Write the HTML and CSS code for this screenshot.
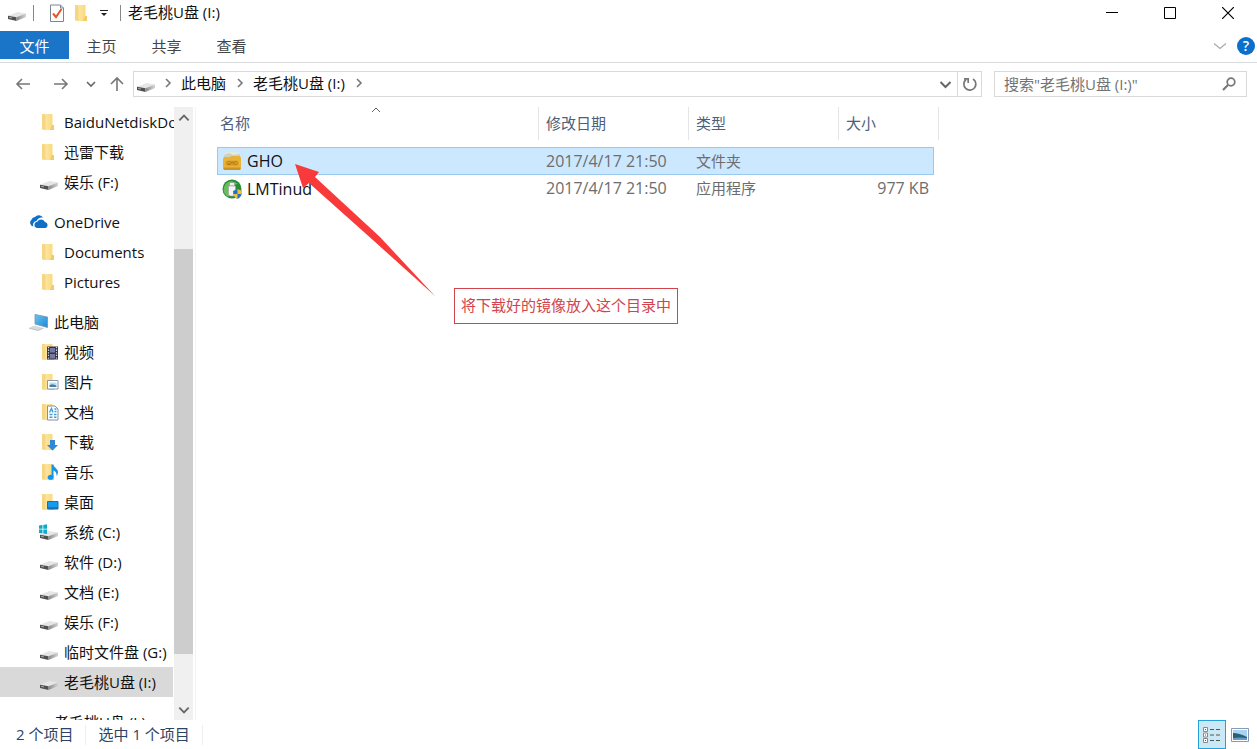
FILE: index.html
```html
<!DOCTYPE html>
<html lang="zh-CN">
<head>
<meta charset="utf-8">
<meta name="viewport" content="width=device-width, initial-scale=1">
<title>老毛桃U盘 (I:)</title>
<link rel="stylesheet" href="styles.css">
</head>
<body>
<svg class="defs" aria-hidden="true">
  <defs>
    <linearGradient id="gold" x1="0" x2="1"><stop offset="0" stop-color="#ffeab0"/><stop offset="1" stop-color="#f9d878"/></linearGradient>
    <linearGradient id="screen" x1="0" y1="0" x2="1" y2="1"><stop offset="0" stop-color="#6cc4f5"/><stop offset="1" stop-color="#1b87d6"/></linearGradient>
    <linearGradient id="metal" x1="0" x2="1"><stop offset="0" stop-color="#8a8a8a"/><stop offset="1" stop-color="#d4d4d4"/></linearGradient>
    <symbol id="drive" viewBox="0 0 20 20">
      <path d="M1 12.800 10.500 9l8.500 1.500-9 4z" fill="#e6e6e6"/>
      <path d="M1 12.800 9.500 14.300V18L1 16z" fill="#505050"/>
      <path d="M9.500 14.300 19 10.500v3.400L9.500 18z" fill="url(#metal)"/>
      <path d="M2 14.300l3 .7" stroke="#a8a8a8"/>
    </symbol>
    <symbol id="folder" viewBox="0 0 20 20">
      <path d="M3 2h10.500v11H15v5H3z" fill="url(#gold)"/>
      <path d="M3 2h1.500l2 1v15L3 17z" fill="#f6d583"/>
      <path d="M13 12.500 15 14v4h-4z" fill="#f1cb68"/>
    </symbol>
    <symbol id="cloud" viewBox="0 0 20 20">
      <path d="M4.500 14.500A3.800 3.800 0 0 1 2.500 7.800 4.200 4.200 0 0 1 6 5 5 5 0 0 1 14 5.500 6 6 0 0 0 7.500 9 3.700 3.700 0 0 0 4.500 14.500z" fill="#0f6fc5"/>
      <path d="M8 16a3.200 3.200 0 0 1 .3-6.300A4.300 4.300 0 0 1 16 10a3.100 3.100 0 0 1 .5 6z" fill="#0f6fc5"/>
    </symbol>
    <symbol id="pc" viewBox="0 0 20 20">
      <path d="M6 2.500 18.500 5v10.500L6 12z" fill="url(#screen)" stroke="#7893a5" stroke-width=".8"/>
      <path d="M5 13.500 14.500 16 9 18.500 0 16z" fill="#d5dade"/><path d="M0 16.200 9 18.500l5.500-2.300" fill="none" stroke="#a5afb8" stroke-width=".7"/>
    </symbol>
    <symbol id="video" viewBox="0 0 20 20">
      <use href="#folder"/><path d="M8 4.500h11v13H8z" fill="#32333e"/>
      <path d="M11 6h5v4.500h-5zM11 12h5v4.500h-5z" fill="#7479a5"/>
      <path d="M9.500 5v12M17.500 5v12" stroke="#ddd" stroke-width="1.200" stroke-dasharray="1.300 1.300"/>
    </symbol>
    <symbol id="picture" viewBox="0 0 20 20">
      <use href="#folder"/><path d="M8.500 8.500H19v8.500H8.500z" fill="#fff" stroke="#8898a5"/>
      <path d="M10.500 10.500h7v2.500h-7z" fill="#b9daf0"/><path d="M10.500 15v-2l3-.8 4 1.300V15z" fill="#467ca5"/>
    </symbol>
    <symbol id="document" viewBox="0 0 20 20">
      <use href="#folder"/><path d="M8.500 4H16l3 3v11H8.500z" fill="#fff" stroke="#81919d"/>
      <path d="M10.500 10.500 12.500 6.500l1.500 4M15.500 7h2M15.500 9.500h2M10.500 12.500h3M15 12.500h2.500M10.500 15.300h3M15 15.300h2.500" fill="none" stroke="#3b9ed8" stroke-width="1.400"/>
    </symbol>
    <symbol id="download" viewBox="0 0 20 20"><use href="#folder"/><path d="M11 8h5v5h3l-5.500 5.500L8 13h3z" fill="#2f87d8"/></symbol>
    <symbol id="music" viewBox="0 0 20 20">
      <use href="#folder"/><path d="M12.500 2.500h2c0 3 4.500 4 4.500 7.500 0 1.500-.6 3-1.500 4 .5-3-1-4.500-3-5.500V15a3 2.500 0 1 1-2-2z" fill="#1495e8"/>
    </symbol>
    <symbol id="desktop" viewBox="0 0 20 20"><use href="#folder"/><path d="M8.500 9.500H19V17H8.500z" fill="#169bf0" stroke="#1971ad"/><path d="M9 16h10" stroke="#125f96"/></symbol>
    <symbol id="system" viewBox="0 0 20 20">
      <use href="#drive"/><path d="M0 3.500 3.500 3v3.800H0zM4.300 2.900 8 2.300v4.500H4.300zM0 7.600h3.500v3.800L0 11zM4.300 7.600H8v4.500l-3.700-.6z" fill="#12a8c9"/>
    </symbol>
    <symbol id="chevron" viewBox="0 0 12 12"><path d="M2 4l4 4 4-4" fill="none" stroke="currentColor" stroke-width="1.600"/></symbol>
  </defs>
</svg>
<div class="window">
  <header class="titlebar">
    <svg class="icon title-drive"><use href="#drive"/></svg>
    <span class="divider"></span>
    <button class="plain quick" aria-label="属性"><svg class="icon" viewBox="0 0 20 20"><path d="M3.500 2h10l3 3v13.500h-13z" fill="#fff" stroke="#7d8794"/><path d="M13.500 2v3h3" fill="none" stroke="#7d8794"/><path d="M6 10.500l3 3.500 5.500-8" fill="none" stroke="#e5532b" stroke-width="2"/></svg></button>
    <button class="plain quick" aria-label="新建文件夹"><svg class="icon"><use href="#folder"/></svg></button>
    <button class="plain quick-menu" aria-label="自定义快速访问工具栏"><svg width="8" height="8" viewBox="0 0 8 8"><path d="M0 1.500h8" stroke="#222"/><path d="M1 4h6L4 7z" fill="#222"/></svg></button>
    <span class="divider"></span>
    <h1 class="title">老毛桃U盘 (I:)</h1>
    <div class="window-buttons">
      <button class="plain" aria-label="最小化"><svg width="12" height="12"><path d="M0 5.500h12" stroke="#000"/></svg></button>
      <button class="plain" aria-label="最大化"><svg width="12" height="12"><path d="M.5.5h11v11H.5z" fill="none" stroke="#000"/></svg></button>
      <button class="plain" aria-label="关闭"><svg width="12" height="12"><path d="M0 0l12 12M12 0 0 12" stroke="#000" stroke-width="1.200"/></svg></button>
    </div>
  </header>
  <nav class="tabs" aria-label="功能区">
    <button class="plain tab file-tab">文件</button>
    <button class="plain tab">主页</button>
    <button class="plain tab">共享</button>
    <button class="plain tab">查看</button>
    <div class="ribbon-tools">
      <button class="plain expand" aria-label="展开功能区"><svg width="16" height="16" viewBox="0 0 16 16"><path d="M2 5.500l6 5 6-5" fill="none" stroke="currentColor" stroke-width="1.300"/></svg></button>
      <button class="plain help" aria-label="帮助">?</button>
    </div>
  </nav>
  <div class="toolbar">
    <div class="history">
      <button class="plain" aria-label="后退"><svg width="16" height="14"><path d="M15 7H2M7 2 2 7l5 5" fill="none" stroke="#777" stroke-width="1.600"/></svg></button>
      <button class="plain" aria-label="前进"><svg width="16" height="14"><path d="M1 7h13M9 2l5 5-5 5" fill="none" stroke="#777" stroke-width="1.600"/></svg></button>
      <button class="plain recent" aria-label="最近位置"><svg width="12" height="12"><use href="#chevron"/></svg></button>
      <button class="plain up" aria-label="上移"><svg width="14" height="16"><path d="M7 15V2M1 8l6-6 6 6" fill="none" stroke="#777" stroke-width="1.600"/></svg></button>
    </div>
    <div class="address">
      <svg class="icon"><use href="#drive"/></svg>
      <svg class="crumb-arrow right"><use href="#chevron"/></svg>
      <a class="crumb" href="#">此电脑</a>
      <svg class="crumb-arrow right"><use href="#chevron"/></svg>
      <a class="crumb" href="#">老毛桃U盘 (I:)</a>
      <svg class="crumb-arrow right"><use href="#chevron"/></svg>
      <button class="plain address-drop" aria-label="以前的位置"><svg width="15" height="15"><use href="#chevron"/></svg></button>
      <button class="plain refresh" aria-label="刷新"><svg width="16" height="16" viewBox="0 0 16 16"><path d="M4 3.500A6 6 0 1 0 11 3M2 2.800h4.200V7" fill="none" stroke="#777" stroke-width="1.700"/></svg></button>
    </div>
    <label class="search">
      <input type="search" aria-label="搜索" placeholder="搜索&quot;老毛桃U盘 (I:)&quot;">
      <svg width="14" height="14" viewBox="0 0 14 14"><circle cx="9" cy="5" r="3.800" fill="none" stroke="#777" stroke-width="1.700"/><path d="M6 8 1 13" stroke="#777" stroke-width="2.200"/></svg>
    </label>
  </div>
  <div class="content">
    <aside class="sidebar">
      <nav class="tree" aria-label="导航窗格">
        <ul>
          <li><a href="#"><svg class="icon"><use href="#folder"/></svg>BaiduNetdiskDownload</a></li>
          <li><a href="#"><svg class="icon"><use href="#folder"/></svg>迅雷下载</a></li>
          <li><a href="#"><svg class="icon"><use href="#drive"/></svg>娱乐 (F:)</a></li>
        </ul>
        <ul>
          <li><a class="root" href="#"><svg class="icon"><use href="#cloud"/></svg>OneDrive</a></li>
          <li><a href="#"><svg class="icon"><use href="#folder"/></svg>Documents</a></li>
          <li><a href="#"><svg class="icon"><use href="#folder"/></svg>Pictures</a></li>
        </ul>
        <ul>
          <li><a class="root" href="#"><svg class="icon"><use href="#pc"/></svg>此电脑</a></li>
          <li><a href="#"><svg class="icon"><use href="#video"/></svg>视频</a></li>
          <li><a href="#"><svg class="icon"><use href="#picture"/></svg>图片</a></li>
          <li><a href="#"><svg class="icon"><use href="#document"/></svg>文档</a></li>
          <li><a href="#"><svg class="icon"><use href="#download"/></svg>下载</a></li>
          <li><a href="#"><svg class="icon"><use href="#music"/></svg>音乐</a></li>
          <li><a href="#"><svg class="icon"><use href="#desktop"/></svg>桌面</a></li>
          <li><a href="#"><svg class="icon"><use href="#system"/></svg>系统 (C:)</a></li>
          <li><a href="#"><svg class="icon"><use href="#drive"/></svg>软件 (D:)</a></li>
          <li><a href="#"><svg class="icon"><use href="#drive"/></svg>文档 (E:)</a></li>
          <li><a href="#"><svg class="icon"><use href="#drive"/></svg>娱乐 (F:)</a></li>
          <li><a href="#"><svg class="icon"><use href="#drive"/></svg>临时文件盘 (G:)</a></li>
          <li><a class="current" href="#" aria-current="page"><svg class="icon"><use href="#drive"/></svg>老毛桃U盘 (I:)</a></li>
        </ul>
        <ul>
          <li><a class="root" href="#"><svg class="icon"><use href="#drive"/></svg>老毛桃U盘 (I:)</a></li>
        </ul>
      </nav>
      <div class="scrollbar">
        <button class="plain" aria-label="向上滚动"><svg class="flip" width="14" height="14"><use href="#chevron"/></svg></button>
        <div class="track"><div class="thumb"></div></div>
        <button class="plain" aria-label="向下滚动"><svg width="14" height="14"><use href="#chevron"/></svg></button>
      </div>
    </aside>
    <main class="files">
      <table class="list">
        <thead>
          <tr>
            <th scope="col" aria-sort="ascending">名称<svg class="sort" width="10" height="6"><path d="M1 5l4-4 4 4" fill="none" stroke="#666"/></svg></th>
            <th scope="col">修改日期</th><th scope="col">类型</th><th scope="col">大小</th>
          </tr>
        </thead>
        <tbody>
          <tr class="selected">
            <td class="name"><svg class="icon" viewBox="0 0 20 20"><path d="M2 3l6-2.500L17 2l1 6H2z" fill="#ece8d8"/><path d="M2 4l5-2 4 2 7-1v5H2z" fill="#c9d4c4"/><path d="M1 7.500 2 6h6l1-1h9l1 2v10q0 2-2 2H3q-2 0-2-2z" fill="#e8b338"/><path d="M1.500 16.500h17v1q0 1.500-1.500 1.500H3q-1.500 0-1.500-1.500z" fill="#cd9220"/><rect x="3" y="9.500" width="14" height="5.500" rx="2.700" fill="#dda52a"/><text class="folder-label" x="10" y="14" text-anchor="middle">GHO</text></svg>GHO</td>
            <td>2017/4/17 21:50</td><td class="kind">文件夹</td><td class="size"></td>
          </tr>
          <tr>
            <td class="name"><svg class="icon" viewBox="0 0 20 20"><circle cx="10" cy="10" r="9.500" fill="#278c36"/><path d="M3 6Q8-1 16 5q-6 0-6 8l-4 5Q-1 13 3 6" fill="#69bd5d"/><path d="M7.500 3.500h5V7h-5z" fill="#eee" stroke="#8a9a8c" stroke-width=".7"/><path d="M6.500 7h7v8q0 2-2 2h-3q-2 0-2-2z" fill="#f3f4f4" stroke="#9ca6a0" stroke-width=".7"/><path d="M11 12l4.500-2 4.500 2q0 6-4.500 8Q11 18 11 12" fill="#2772c8"/><path d="M15.500 10l4.500 2q0 2-.5 3h-4zM11.500 15h4v5q-3-1-4-5" fill="#f5c338"/></svg>LMTinud</td>
            <td>2017/4/17 21:50</td><td class="kind">应用程序</td><td class="size">977 KB</td>
          </tr>
        </tbody>
      </table>
      <svg class="pointer" width="142" height="134" viewBox="0 0 142 134" aria-hidden="true"><path d="M0 0 24 8l-4 5 65 60 55 59-61-55L14 19l-6 5z" fill="#f93a3a"/></svg>
      <p class="note">将下载好的镜像放入这个目录中</p>
    </main>
  </div>
  <footer class="status">
    <span class="status-item">2 个项目</span>
    <span class="status-item">选中 1 个项目</span>
    <div class="views">
      <button class="plain view active" aria-label="详细信息"><svg width="20" height="18" viewBox="0 0 20 18"><path d="M1.500 1.500h4v4h-4zM1.500 7h4v4h-4zM1.500 12.500h4v4h-4z" fill="#fff" stroke="#888"/><path d="M3 3.500h1M3 9h1M3 14.500h1M8 3.500h4M14 3.500h4M8 9h4M14 9h4M8 14.500h4M14 14.500h4" stroke="#555"/></svg></button>
      <button class="plain view" aria-label="大图标"><svg width="18" height="14" viewBox="0 0 18 14"><path d="M.5.5h17v13H.5z" fill="#fff" stroke="#8799b5"/><path d="M2 2h14v10H2z" fill="#a8d4f2"/><path d="M2 5q6 0 14 4v2H2z" fill="#276078"/><path d="M2 10q7-1 14 0v2H2z" fill="#6a9bc8"/></svg></button>
    </div>
  </footer>
</div>
</body>
</html>
```
FILE: styles.css
```css
* { box-sizing: border-box; }
body {
  margin: 0;
  background: #fff;
  color: #111;
  font: 15px/20px "Open Sans", "Noto Sans CJK SC", sans-serif;
}
.defs { position: absolute; width: 0; height: 0; }
svg { flex: none; display: block; }
a { color: inherit; text-decoration: none; }
.plain {
  display: flex;
  align-items: center;
  justify-content: center;
  margin: 0;
  padding: 0;
  border: 0;
  background: none;
  color: #666;
  font: inherit;
}
.icon { width: 20px; height: 20px; }
.window { display: flex; flex-direction: column; height: 100vh; overflow: hidden; }

.titlebar { display: flex; align-items: center; height: 26px; margin-bottom: 5px; padding-left: 7px; }
.divider { width: 1px; height: 16px; background: #888; }
.title-drive { margin-right: 6px; }
.quick { width: 25px; }
.divider + .quick { margin-left: 10px; }
.quick-menu { width: 20px; margin-right: 6px; }
.title { margin: 0 0 0 7px; padding-bottom: 2px; font-size: 15px; font-weight: 400; }
.window-buttons { display: flex; margin-left: auto; }
.window-buttons .plain { width: 58px; height: 24px; }

.tabs { display: flex; height: 32px; flex: none; border-bottom: 1px solid #d8dadc; }
.tab { width: 65px; height: 28px; padding-top: 1px; color: #444; }
.file-tab { width: 69px; background: #1a74c8; color: #fff; }
.ribbon-tools { display: flex; align-items: center; gap: 9px; margin-left: auto; padding: 0 2px 2px 0; }
.expand { color: #aaa; }
.help { width: 18px; height: 18px; border-radius: 50%; background: #0b70cc; color: #fff; font-size: 14px; font-weight: 600; }

.toolbar { display: flex; flex: none; gap: 12px; padding: 8px 10px 8px 0; }
.history { display: flex; align-items: center; width: 121px; padding-left: 15px; }
.history .plain { width: 16px; }
.history .plain + .plain { margin-left: 22px; }
.history .plain.recent { width: 12px; margin-left: 16px; }
.history .plain.up { width: 14px; margin-left: 13px; }
.address, .search { display: flex; align-items: center; height: 26px; border: 1px solid #d9d9d9; }
.address { flex: 1; padding-left: 2px; }
.crumb-arrow { width: 12px; height: 12px; margin: 0 7px 2px 6px; color: #777; }
.crumb + .crumb-arrow { margin-left: 8px; }
.crumb { padding-bottom: 2px; }
.right { transform: rotate(-90deg); }
.address-drop { width: 24px; height: 24px; margin-left: auto; }
.refresh { width: 24px; height: 24px; border-left: 1px solid #d9d9d9; }
.search { width: 253px; padding: 0 10px 0 9px; }
.search input { flex: 1; min-width: 0; padding: 0; border: 0; outline: 0; background: none; font: inherit; }
.search input::placeholder { color: #737373; opacity: 1; }

.content { display: flex; flex: 1; min-height: 0; padding-top: 2px; }
.sidebar { display: flex; width: 196px; border-right: 1px solid #f3f3f3; }
.tree { width: 174px; padding-right: 1px; overflow: hidden; }
.tree ul { margin: 0 0 10px; padding: 0; list-style: none; }
.tree a { display: flex; align-items: center; gap: 5px; height: 30px; padding-left: 39px; white-space: nowrap; }
.tree .root { padding-left: 29px; }
.tree .current { background: #d9d9d9; }
.scrollbar { display: flex; flex-direction: column; width: 19px; background: #f0f0f0; }
.scrollbar .plain { height: 21px; }
.flip { transform: rotate(180deg); }
.track { flex: 1; padding-top: 121px; }
.thumb { height: 90%; background: #cdcdcd; }

.files { position: relative; flex: 1; padding-left: 21px; }
.list { display: block; border-spacing: 0; }
.list tr { display: grid; grid-template-columns: 322px 150px 150px 1fr; width: 722px; }
.list th { position: relative; height: 33px; padding: 0 7px; border-right: 1px solid #e5e5e5; color: #4c607a; font-weight: 400; line-height: 33px; text-align: left; }
.list th:first-child { padding-left: 3px; }
.sort { position: absolute; top: 0; left: 50%; margin-left: -7px; }
.list thead tr { margin-bottom: 7px; }
.list tbody tr { width: 717px; height: 27px; border: 1px solid transparent; }
.list tbody .selected { height: 28px; border-color: #99c9ef; background: #cce8ff; }
.list td { padding: 0 6px; color: #6d6d6d; font-size: 16px; line-height: 26px; }
.list tr:not(.selected) td { line-height: 24px; }
.list .name { display: flex; align-items: center; gap: 5px; padding-left: 4px; color: #111; }
.list .kind { font-size: 15px; }
.list .size { padding-right: 4px; text-align: right; }
.folder-label { fill: #8f5e0b; font-size: 5px; }
.pointer { position: absolute; top: 57px; left: 99px; }
.note { position: absolute; top: 181px; left: 258px; margin: 0; padding: 6px 6px 8px; border: 1px solid #d3434b; color: #d3434b; font-family: "Noto Sans CJK SC", sans-serif; white-space: nowrap; }

.status { display: flex; align-items: center; flex: none; height: 29px; padding-left: 4px; color: #2c4361; }
.status-item { padding: 0 12px 2px; border-right: 1px solid #eee; line-height: 18px; }
.views { display: flex; align-self: stretch; margin-left: auto; padding-right: 3px; }
.view { width: 28px; height: 29px; }
.active { border: 1px solid #26a0da; background: #cbe8f6; }
```
